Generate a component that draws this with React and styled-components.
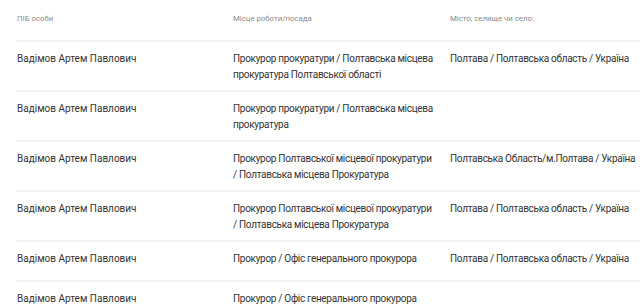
import React from 'react';
import styled, { createGlobalStyle } from 'styled-components';

const GlobalStyle = createGlobalStyle`
  body {
    margin: 0;
    background: #fff;
    font-family: Roboto, "Noto Sans", sans-serif;
    -webkit-font-smoothing: antialiased;
  }
`;

const Table = styled.div`
  padding-left: 16px;
`;

const Row = styled.div`
  display: grid;
  grid-template-columns: 216px 217px 1fr;
  border-top: ${(p) => (p.head ? 'none' : '2px solid #f2f2f2')};
  & > :nth-child(2) {
    padding-right: 14px;
  }
  & > :last-child {
    padding-right: 0;
  }
`;

const HeadCell = styled.div`
  padding: 12px 4px 14px 1px;
  font-size: 7.8px;
  line-height: 14px;
  color: #8a8a8a;
`;

const Cell = styled.div`
  padding: 9px 6px 7px 1px;
  min-height: 22px;
  font-size: 10px;
  line-height: 16px;
  letter-spacing: ${(p) => (p.tight ? '-0.3px' : '0')};
  color: #333;
`;

const rows = [
  ['Прокурор прокуратури / Полтавська місцева прокуратура Полтавської області', 'Полтава / Полтавська область / Україна'],
  ['Прокурор прокуратури / Полтавська місцева прокуратура', ''],
  ['Прокурор Полтавської місцевої прокуратури / Полтавська місцева Прокуратура', 'Полтавська Область/м.Полтава / Україна'],
  ['Прокурор Полтавської місцевої прокуратури / Полтавська місцева Прокуратура', 'Полтава / Полтавська область / Україна'],
  ['Прокурор / Офіс генерального прокурора', 'Полтава / Полтавська область / Україна'],
  ['Прокурор / Офіс генерального прокурора', ''],
];

export default function App() {
  return (
    <>
      <GlobalStyle />
      <Table>
        <Row head>
          <HeadCell>ПІБ особи</HeadCell>
          <HeadCell>Місце роботи/посада</HeadCell>
          <HeadCell>Місто, селище чи село:</HeadCell>
        </Row>
        {rows.map(([job, city], i) => (
          <Row key={i}>
            <Cell>Вадімов Артем Павлович</Cell>
            <Cell tight>{job}</Cell>
            <Cell tight>{city}</Cell>
          </Row>
        ))}
      </Table>
    </>
  );
}
